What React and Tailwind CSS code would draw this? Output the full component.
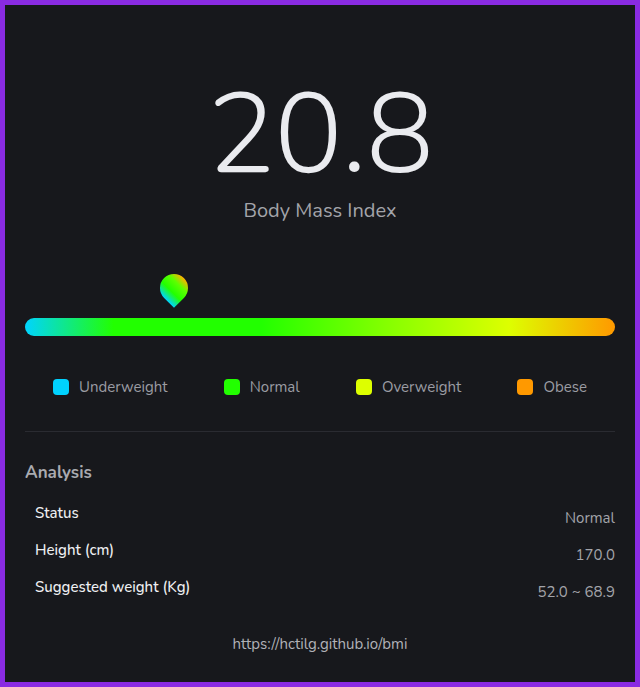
const legend = [
  { label: 'Underweight', color: 'bg-[#00d2ff]' },
  { label: 'Normal', color: 'bg-[#22ff00]' },
  { label: 'Overweight', color: 'bg-[#ddff00]' },
  { label: 'Obese', color: 'bg-[#ff9900]' }
];

const rows = [
  { label: 'Status', value: 'Normal' },
  { label: 'Height (cm)', value: '170.0' },
  { label: 'Suggested weight (Kg)', value: '52.0 ~ 68.9' }
];

const App = () => {
  return (
    <div className="h-[687px] overflow-hidden border-[5px] border-[#8a2be2] bg-[#17181c] px-5 font-['Nunito','Lato',sans-serif] text-[#e9eaee]">
      <div className="flex flex-col items-center pt-[73px]">
        <h1 className="text-[114px] font-light leading-none tracking-[-1px] text-[#eaebef]">20.8</h1>
        <p className="mt-[5px] text-[20px] leading-7 text-[#a3a4aa]">Body Mass Index</p>
      </div>

      <div className="relative mt-[51px] pt-[42px]">
        <div
          className="absolute top-[-2px] h-[28px] w-[28px] -translate-x-1/2 rotate-45 rounded-[50%_50%_0_50%] bg-[linear-gradient(to_top,#00d4ff_0%,#22ff00_35%,#5cff00_70%,#ffb000_100%)]"
          style={{ left: '25.2%' }}
        />
        <div className="h-[18px] rounded-full bg-[linear-gradient(to_right,#00d4ff_0%,#22ff00_15%,#22ff00_40%,#88ff00_62%,#ddff00_82%,#ff9900_100%)]" />
      </div>

      <div className="mt-[40px] flex justify-around text-[15px] text-[#9b9ca3]">
        {legend.map((item) => (
          <div key={item.label} className="flex items-center gap-[10px]">
            <span className={`h-4 w-4 rounded-[4px] ${item.color}`} />
            <span>{item.label}</span>
          </div>
        ))}
      </div>

      <div className="mt-[32px] h-px bg-[#2a2b31]" />

      <h2 className="mt-[28px] text-[17px] font-bold text-[#a9aab0]">Analysis</h2>

      <div className="mt-[17px] space-y-[10px] pl-[10px]">
        {rows.map((row) => (
          <div key={row.label} className="flex items-start justify-between text-[15px] leading-[22px]">
            <span className="font-medium text-[#eeeff2]">{row.label}</span>
            <span className="pt-[5px] text-[#a3a4aa]">{row.value}</span>
          </div>
        ))}
      </div>

      <p className="mt-[30px] text-center text-[15px] text-[#b1b2b8]">
        https://hctilg.github.io/bmi
      </p>
    </div>
  );
};

export default App;
